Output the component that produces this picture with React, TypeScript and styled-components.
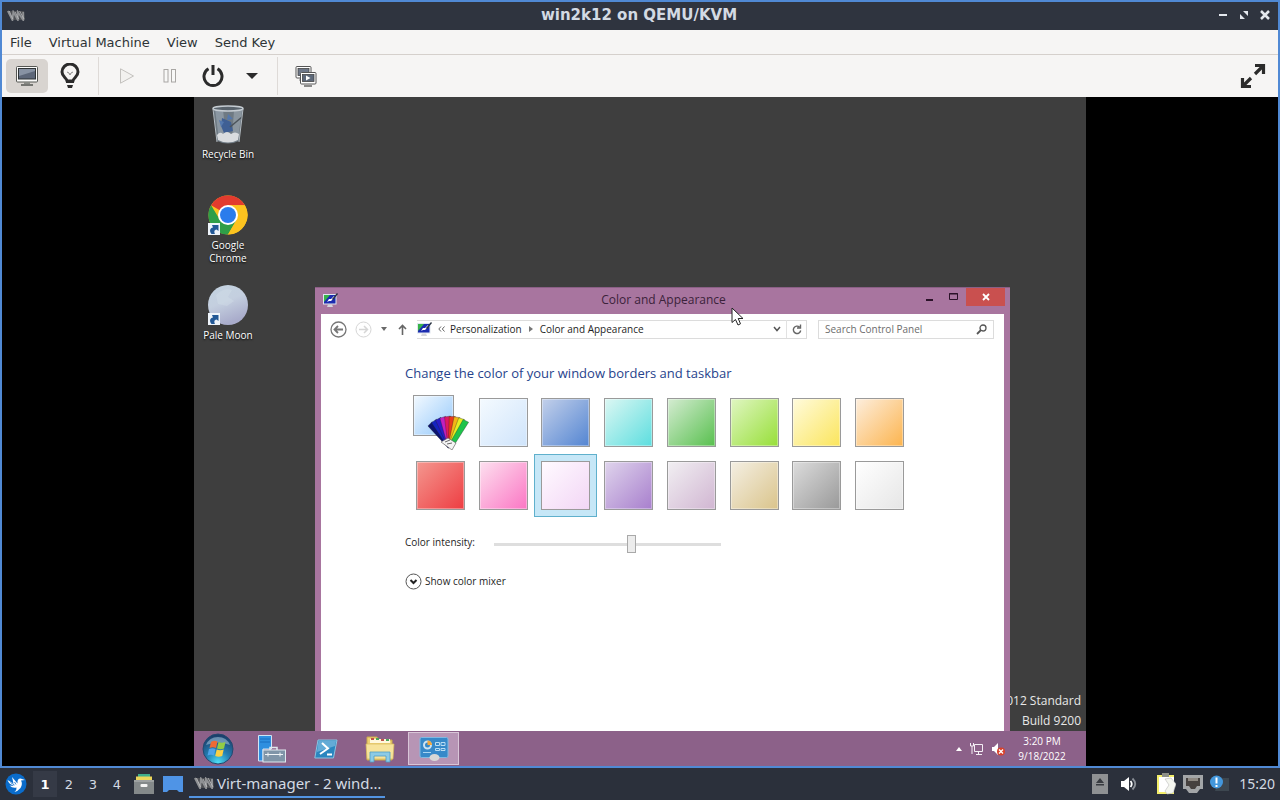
import React from "react";
import styled, { createGlobalStyle, css } from "styled-components";

const Global = createGlobalStyle`
  *, *::before, *::after { box-sizing: border-box; }
  body { margin: 0; background: #2b303b; }
  button, input { font: inherit; color: inherit; }
  button { background: none; border: 0; padding: 0; margin: 0; }
  h1, h2, p, ul { margin: 0; padding: 0; font-weight: inherit; font-size: inherit; }
  svg { display: block; }
`;

const guestFont = `"Open Sans", "Noto Sans", sans-serif`;

const Screen = styled.div`
  display: flex;
  flex-direction: column;
  height: 100vh;
`;

/* ---------- viewer window ---------- */

const Viewer = styled.main`
  flex: 1;
  min-height: 0;
  display: flex;
  flex-direction: column;
  border: 2px solid #5089d4;
  background: #f6f5f4;
  font: 13px/18px "DejaVu Sans", sans-serif;
  color: #2e3436;
`;

const TitleBar = styled.header`
  display: grid;
  grid-template-columns: 1fr auto 1fr;
  align-items: center;
  height: 28px;
  padding: 0 7px 2px 5px;
  background: #2f343f;
  color: #d3dae3;
`;

const ViewerTitle = styled.h1`
  font-size: 15px;
  font-weight: bold;
`;

const TitleButtons = styled.div`
  display: flex;
  justify-content: flex-end;
  gap: 9px;
`;

const TitleButton = styled.button`
  width: 12px;
  height: 12px;
  color: #e4e8ee;
`;

const MenuBar = styled.nav`
  display: flex;
  align-items: center;
  height: 25px;
  padding: 1px 0 0 8px;
  gap: 17px;
  border-bottom: 1px solid #d5d0cc;
`;

const Toolbar = styled.div`
  display: flex;
  align-items: center;
  height: 42px;
  padding: 0 12px 0 4px;
`;

const ToolButton = styled.button<{ $active?: boolean; $wide?: number }>`
  display: grid;
  place-items: center;
  width: ${(p) => p.$wide ?? 42}px;
  height: 34px;
  border-radius: 5px;
  ${(p) => p.$active && css`background: #d8d4d0;`}
`;

const ToolDivider = styled.span`
  width: 1px;
  height: 38px;
  margin: 0 7px;
  background: #dedad7;
`;

const Grow = styled.span`
  flex: 1;
`;

const Console = styled.div`
  flex: 1;
  min-height: 0;
  display: flex;
  justify-content: center;
  background: #000;
`;

/* ---------- guest desktop ---------- */

const Guest = styled.section`
  height: 100%;
  aspect-ratio: 4 / 3;
  display: flex;
  flex-direction: column;
  overflow: hidden;
  font: 11px/13px ${guestFont};
`;

const Desktop = styled.div`
  position: relative;
  flex: 1;
  min-height: 0;
  overflow: hidden;
  background: #3e3e3e;
`;

const Shortcuts = styled.ul`
  display: grid;
  grid-auto-rows: 90px;
  width: 68px;
  padding-top: 8px;
  list-style: none;
`;

const Shortcut = styled.button`
  display: flex;
  flex-direction: column;
  align-items: center;
  gap: 3px;
  width: 68px;
  font-size: 10px;
  color: #fff;
  text-shadow: 0 1px 2px #000;
`;

const Watermark = styled.p`
  position: absolute;
  right: 5px;
  bottom: 0;
  font-size: 12px;
  line-height: 20px;
  text-align: right;
  color: #e8e8e8;
`;

const Win = styled.section`
  position: absolute;
  top: 190px;
  left: 121px;
  width: 695px;
  height: 480px;
  display: flex;
  flex-direction: column;
  padding: 0 6px;
  background: #a8759f;
  border-top: 1px solid #8a5f85;
`;

const WinTitle = styled.header`
  display: grid;
  grid-template-columns: 1fr auto 1fr;
  align-items: center;
  height: 26px;
  padding: 0 0 2px 2px;
  color: #3b223a;
`;

const WinName = styled.h2`
  font-size: 12px;
  line-height: 16px;
`;

const WinButtons = styled.div`
  display: flex;
  justify-content: flex-end;
  align-self: start;
  margin-right: -1px;
`;

const WinButton = styled.button<{ $close?: boolean }>`
  display: grid;
  place-items: center;
  width: ${(p) => (p.$close ? 39 : 24)}px;
  height: 18px;
  ${(p) => p.$close && css`background: #c9504f; color: #fff;`}
`;

const WinBody = styled.div`
  flex: 1;
  background: #fff;
  color: #1e1e1e;
`;

const NavRow = styled.div`
  display: flex;
  align-items: center;
  height: 30px;
  padding: 0 10px 0 9px;
`;

const NavButton = styled.button<{ $w: number }>`
  display: grid;
  place-items: center;
  width: ${(p) => p.$w}px;
  height: 18px;
`;

const AddressBar = styled.div`
  flex: 1;
  display: flex;
  align-items: center;
  height: 19px;
  margin-right: 11px;
  border: 1px solid #dcdcdc;
  border-left: 0;
`;

const Crumb = styled.a`
  font-size: 10px;
  color: #1e1e1e;
  text-decoration: none;
`;

const CrumbMark = styled.span`
  display: grid;
  place-items: center;
  width: 18px;
`;

const RefreshCell = styled.span`
  padding-left: 1px;
  border-left: 1px solid #e2e2e2;
`;

const SearchBox = styled.label`
  display: flex;
  align-items: center;
  width: 176px;
  height: 19px;
  padding: 0 6px;
  border: 1px solid #dcdcdc;
`;

const SearchInput = styled.input`
  flex: 1;
  min-width: 0;
  padding: 0;
  border: 0;
  outline: 0;
  background: none;
  font-size: 10px;
  &::placeholder { color: #6d6d6d; opacity: 1; }
`;

const Panel = styled.div`
  padding: 20px 84px;
`;

const Heading = styled.h2`
  font-size: 13px;
  line-height: 18px;
  color: #27438c;
`;

const Swatches = styled.div`
  display: grid;
  grid-template-columns: repeat(8, 49px);
  justify-content: space-between;
  row-gap: 14px;
  width: 488px;
  margin: 16px 0 0 11px;
`;

const Swatch = styled.input<{ $from: string; $to: string }>`
  appearance: none;
  width: 49px;
  height: 49px;
  margin: 0;
  border: 1px solid #9a9a9a;
  background: linear-gradient(135deg, ${(p) => p.$from}, ${(p) => p.$to});
  box-shadow: inset 0 0 0 1px rgba(255, 255, 255, 0.35);
  &:checked {
    outline: 1px solid #5fb0cc;
    outline-offset: 6px;
    box-shadow: 0 0 0 6px #c6e7f7;
  }
`;

const CustomCell = styled.label`
  position: relative;
  width: 49px;
  height: 49px;
`;

const CustomSwatch = styled(Swatch)`
  position: absolute;
  top: -3px;
  left: -3px;
  width: 41px;
  height: 41px;
`;

const Fan = styled.svg`
  position: absolute;
  top: 16px;
  left: 11px;
`;

const SliderRow = styled.div`
  display: flex;
  align-items: center;
  height: 20px;
  margin-top: 24px;
`;

const SliderLabel = styled.label`
  width: 89px;
  padding-bottom: 3px;
  font-size: 10px;
`;

const Slider = styled.input`
  appearance: none;
  width: 227px;
  height: 18px;
  margin: 0;
  background: linear-gradient(#dedede, #dedede) center / 100% 3px no-repeat;
  &::-webkit-slider-thumb {
    appearance: none;
    width: 9px;
    height: 18px;
    border: 1px solid #a9a9a9;
    background: #ececec;
  }
`;

const MixerButton = styled.button`
  display: flex;
  align-items: center;
  gap: 3px;
  margin-top: 19px;
  font-size: 10px;
`;

const GuestBar = styled.footer`
  display: flex;
  align-items: center;
  height: 35px;
  background: #8c6189;
  color: #fff;
`;

const GuestApp = styled.button<{ $active?: boolean; $start?: boolean }>`
  display: grid;
  place-items: center;
  width: ${(p) => (p.$start ? 47 : 51)}px;
  height: 33px;
  margin-right: ${(p) => (p.$start ? 5 : 3)}px;
  ${(p) => p.$active && css`
    background: #b795b5;
    border: 1px solid #d9c6d8;
  `}
`;

const GuestTray = styled.div`
  display: flex;
  align-items: center;
  gap: 8px;
  margin-left: auto;
  padding-right: 15px;
`;

const GuestClock = styled.time`
  width: 58px;
  font-size: 10px;
  line-height: 15px;
  text-align: center;
`;

const Pointer = styled.svg`
  position: absolute;
  top: 210px;
  left: 537px;
`;

/* ---------- host panel ---------- */

const HostBar = styled.footer`
  display: flex;
  align-items: center;
  height: 32px;
  padding: 0 5px;
  background: #2b303b;
  font: 14px/20px "Noto Sans", sans-serif;
  color: #d3dae3;
`;

const HostIcon = styled.button<{ $gap?: number }>`
  margin-right: ${(p) => p.$gap ?? 0}px;
`;

const Pager = styled.div`
  display: flex;
  margin: 0 5px 0 6px;
`;

const PagerButton = styled.button<{ $active?: boolean }>`
  width: 24px;
  height: 26px;
  padding-top: 2px;
  font-family: "DejaVu Sans", sans-serif;
  font-size: 13px;
  ${(p) => p.$active && css`
    background: #353a46;
    font-weight: bold;
    color: #fff;
  `}
`;

const TaskButton = styled.button`
  display: flex;
  align-items: center;
  gap: 3px;
  width: 196px;
  height: 28px;
  margin-left: 6px;
  padding-left: 5px;
  border-bottom: 2px solid #5294e2;
  font-size: 15px;
`;

const HostTray = styled.div`
  display: flex;
  align-items: center;
  margin-left: auto;
`;

/* ---------- drawings ---------- */

const VmLogo = ({ w = 18, h = 11 }: { w?: number; h?: number }) => (
  <svg width={w} height={h} viewBox="0 0 20 12">
    <path d="M0 1h19l1 10H5z" fill="#4e5054" />
    <path d="M1 1l5 10L7 2l5 9 0-9 6 9V2" fill="none" stroke="#8f9194" strokeWidth="2" />
    <path d="M2.500 1l4 9M9 2l4 8M14 1l5 9" fill="none" stroke="#c4c5c7" strokeWidth=".8" />
  </svg>
);

const MonitorIcon = () => (
  <svg width="24" height="22" viewBox="0 0 24 22">
    <rect x="1.5" y="1.5" width="21" height="15.5" rx="1" fill="#fbfbfa" stroke="#555753" />
    <rect x="3.5" y="3.5" width="17" height="10.5" fill="#5c6678" stroke="#2e3436" />
    <path d="M4 4h16v2L4 11z" fill="#8792a3" />
    <path d="M9 17h6v2H9z" fill="#888a85" />
    <path d="M6 20h12" stroke="#555753" strokeWidth="1.5" />
  </svg>
);

const BulbIcon = () => (
  <svg width="20" height="26" viewBox="0 0 20 26" fill="none">
    <path d="M7 18c0-3-5-4-5-9a8 8 0 0 1 16 0c0 5-5 6-5 9z" stroke="#2b2b2b" strokeWidth="3" strokeLinejoin="round" />
    <path d="M7 9l2 1 1 2 1-2 2-1" stroke="#8b8b8b" />
    <path d="M6 17h8v3H6zM7 22h6l-1 3H8z" fill="#2b2b2b" />
  </svg>
);

const PlayIcon = () => (
  <svg width="16" height="16" viewBox="0 0 16 16">
    <path d="M1.500.8L14.500 8 1.500 15.200z" fill="#f2f1ef" stroke="#c3c1be" />
  </svg>
);

const PauseIcon = () => (
  <svg width="14" height="14" viewBox="0 0 14 14" fill="#f8f8f7" stroke="#a8a6a3">
    <rect x="1" y=".5" width="4" height="12.500" />
    <rect x="8.500" y=".5" width="4" height="12.500" />
  </svg>
);

const PowerIcon = () => (
  <svg width="22" height="24" viewBox="0 0 22 24" fill="none" stroke="#2b2b2b" strokeWidth="3">
    <path d="M6.500 4.800a9 9 0 1 0 9 0M11 1v10" />
  </svg>
);

const SnapshotsIcon = () => (
  <svg width="22" height="22" viewBox="0 0 22 22">
    <rect x="1" y="1.500" width="15" height="11.500" rx="1" fill="#fff" stroke="#555" />
    <rect x="3" y="3.500" width="11" height="7" fill="#6d7788" stroke="#444" strokeWidth=".8" />
    <path d="M4 15h4" stroke="#888" />
    <rect x="5.500" y="7.500" width="15.500" height="11.500" rx="1" fill="#fff" stroke="#555" />
    <rect x="7.500" y="9.500" width="11.500" height="7" fill="#5d6879" stroke="#444" strokeWidth=".8" />
    <path d="M11 10.500l4.500 2.500-4.500 2.500z" fill="#fff" />
    <path d="M9 21h8" stroke="#666" strokeWidth="1.500" />
  </svg>
);

const ExpandIcon = () => (
  <svg width="26" height="26" viewBox="0 0 26 26">
    <path d="M15 11l8-8M11 15l-8 8M15 2.500h8.500V11M11 23.500H2.500V15" fill="none" stroke="#2b2b2b" strokeWidth="3.200" />
  </svg>
);

const BinIcon = () => (
  <svg width="36" height="40" viewBox="0 0 36 40">
    <path d="M3 2l4 34q11 5 22 0l4-34z" fill="#6f7a83" />
    <path d="M5 4l4 31h7L13 4z" fill="#97a4af" opacity=".7" />
    <path d="M24 5l-2 30 6-1 4-29z" fill="#8b969f" />
    <path d="M12 13l9 4 2 9-9 2-3-7z" fill="#3f5f94" />
    <path d="M9 15l5 2-3 5zM18 9l5 5-6 1z" fill="#5478ad" />
    <path d="M20 22l12-10" stroke="#4c545b" strokeWidth="1.500" />
    <path d="M7 30q3-4 6-1 4-4 8 0 4-3 8 0l-1 6q-10 5-20 0z" fill="#d9dcdf" />
    <ellipse cx="18" cy="3.500" rx="15" ry="2.500" fill="#59636c" stroke="#c5ccd2" strokeWidth="1.500" />
    <path d="M3 4l4 33M33 4l-4 33" stroke="#b4bcc2" />
  </svg>
);

const LinkBadge = () => (
  <g transform="translate(0 28)">
    <rect width="12" height="12" fill="#eef4fa" />
    <path d="M3.500 11C1 8 2 5 5 4.500L4 2h6.500v6L8.500 6.500C6 7 6 9 7 11z" fill="#225896" />
  </g>
);

const ChromeIcon = () => (
  <svg width="40" height="41" viewBox="0 0 40 41">
    <circle cx="20" cy="20" r="19.500" fill="#fcc31f" />
    <path d="M20 20L3.100 10.200A19.500 19.500 0 0 1 36.900 10.200H20z" fill="#e23b2e" />
    <path d="M3.100 10.200A19.500 19.500 0 0 0 20 39.500L28.500 25 12 25z" fill="#2f9e48" />
    <path d="M20 20h8.500v5L20 39.500A19.500 19.500 0 0 0 36.900 10.200H20z" fill="#fcc31f" />
    <circle cx="20" cy="20" r="10" fill="#fff" />
    <circle cx="20" cy="20" r="8" fill="#2b7cec" />
    <LinkBadge />
  </svg>
);

const MoonIcon = () => (
  <svg width="40" height="41" viewBox="0 0 40 41">
    <defs>
      <linearGradient id="moon" x1="0" y1="0" x2=".4" y2="1">
        <stop offset="0" stopColor="#c3d3e0" />
        <stop offset=".5" stopColor="#c4cfdf" />
        <stop offset="1" stopColor="#a9accb" />
      </linearGradient>
    </defs>
    <circle cx="20" cy="20" r="20" fill="url(#moon)" />
    <path d="M8 10q8-8 16-5l-4 7 6 4-7 5-9-2z" fill="#d7e1ea" opacity=".35" />
    <LinkBadge />
  </svg>
);

const ThemeIcon = () => (
  <svg width="15" height="15" viewBox="0 0 15 15">
    <rect x=".5" y="1.500" width="12.500" height="9.500" fill="#1c2bb0" stroke="#dfe6ee" />
    <path d="M1 2h6L1 9z" fill="#37b34a" />
    <path d="M4 9l2-3 2 0 3-3 1 1-4 4H6z" fill="#fff" />
    <path d="M9 6l5-6 1 1-5 6z" fill="#27303f" />
    <path d="M5 11.500h4l1 2.500H4z" fill="#d5d5db" />
  </svg>
);

const OrbIcon = () => (
  <svg width="32" height="32" viewBox="0 0 32 32">
    <defs>
      <radialGradient id="orb" cx=".5" cy=".95" r=".9">
        <stop offset="0" stopColor="#4fe0f5" />
        <stop offset=".45" stopColor="#2480b4" />
        <stop offset="1" stopColor="#1b3f6b" />
      </radialGradient>
    </defs>
    <circle cx="16" cy="16" r="15" fill="url(#orb)" stroke="#24486f" />
    <path d="M4 12a13 13 0 0 1 24 0q-12-5-24 0z" fill="#a9c7dc" opacity=".55" />
    <path d="M9 9q3-2 6.500-.5L14 15q-3-1.500-6.500 0z" fill="#ee6a35" />
    <path d="M16.500 9q3.500 1.500 7 0L22 15.500q-3.500 1.500-7 0z" fill="#93cc45" />
    <path d="M7 16q3.500-1.500 6.500 0L12 22.500q-3-1.500-6.500 0z" fill="#4fa3e8" />
    <path d="M14.700 16.500q3.500 1.500 7 0l-1.500 6.500q-3.500 1.500-7 0z" fill="#fbd044" />
  </svg>
);

const ServerIcon = () => (
  <svg width="30" height="30" viewBox="0 0 30 30">
    <path d="M1.500 1.500h13V15H6v12H1.500z" fill="#2f8fe0" stroke="#cfe4f5" />
    <path d="M3 5h10M3 8h10" stroke="#1b6fc0" />
    <path d="M13 16v-2.500h7V16" fill="none" stroke="#dfe8ee" strokeWidth="1.500" />
    <rect x="6" y="16" width="22.500" height="12" fill="#7f95a8" stroke="#dfe8ee" />
    <path d="M8 20.500h18M11 18.500v4M23 18.500v4" stroke="#f0f4f6" />
  </svg>
);

const ShellIcon = () => (
  <svg width="24" height="20" viewBox="0 0 24 20">
    <path d="M4 1h19l-3.500 18H.8z" fill="#2a86bf" stroke="#8cc3e0" />
    <path d="M4.500 2H22l-1 5L3 13z" fill="#7cbbdf" opacity=".7" />
    <path d="M8 4l6 5.500L6 15M13 15.500h5" fill="none" stroke="#fff" strokeWidth="2" />
  </svg>
);

const FolderIcon = () => (
  <svg width="30" height="28" viewBox="0 0 30 28">
    <path d="M2 2h10l1 3h14v20H2z" fill="#eed275" stroke="#c9a84a" />
    <path d="M5 4h20v4H5z" fill="#fff8dc" />
    <path d="M6 4h3M16 5h3" stroke="#c0524a" strokeWidth="2" />
    <path d="M11 4h3M21 5h3" stroke="#4aa35b" strokeWidth="2" />
    <path d="M1 9h28l-1 15H2z" fill="#f7e39b" stroke="#d7b95c" strokeWidth=".7" />
    <path d="M5 27V17h20v10h-4v-6H9v6z" fill="#8ccbe6" stroke="#4f9dc4" strokeWidth=".8" />
  </svg>
);

const ControlPanelIcon = () => (
  <svg width="30" height="26" viewBox="0 0 30 26">
    <rect x="1" y="1.500" width="28" height="20" rx="1.500" fill="#3789c9" stroke="#7fb9e2" />
    <circle cx="8.500" cy="9" r="3.500" fill="none" stroke="#cfe3f1" strokeWidth="2" />
    <path d="M8.500 9V4.500A4.500 4.500 0 0 1 13 9z" fill="#f4a63a" />
    <path d="M16.500 6.500h4v3h-4zM22 6.500h4v3h-4zM16.500 12.500h4v2h-4zM22 12.500h4v2h-4z" fill="none" stroke="#b9dcf2" />
    <path d="M4 16.500h8" stroke="#a8d5f2" />
    <ellipse cx="15.500" cy="21.500" rx="5" ry="3.500" fill="#d8d8d6" />
  </svg>
);

const fanColors = ["#0b1370", "#1524c0", "#2a1cc8", "#c220c0", "#e01860", "#e83a1c", "#f4b516", "#e6ee22", "#1fc34b"];

const FanIcon = () => (
  <Fan width="42" height="36" viewBox="0 0 42 36">
    {fanColors.map((color, i) => (
      <path
        key={color}
        d="M21 33L17.500 3l6-1 2 31z"
        fill={color}
        stroke="#222"
        strokeWidth=".3"
        transform={`rotate(${-36 + i * 9} 23 33)`}
      />
    ))}
    <path d="M14 28l7-4 8 5-4 7z" fill="#f4f4f4" stroke="#555" strokeWidth=".6" />
    <path d="M18 28l5-2M20 30l5-1" stroke="#444" strokeWidth=".8" />
  </Fan>
);

const BirdIcon = () => (
  <svg width="22" height="22" viewBox="0 0 22 22">
    <circle cx="11" cy="11" r="10.500" fill="#0a6ccb" />
    <path d="M2.500 7l6 3.500L7 4l5.500 6.500Q12 5.500 15.500 5.500L20 7l-4 .6Q18 11 15.500 15 13 18 9.500 19q2.500-2.500 2-4.500-4 1-7-2 3 .5 4.500 0Q4 11.500 2.500 7z" fill="#fff" />
    <path d="M5.500 9.500l4 2.500M9.500 9l1.500 2.500" stroke="#0a6ccb" strokeWidth=".8" />
  </svg>
);

const CabinetIcon = () => (
  <svg width="20" height="22" viewBox="0 0 20 22">
    <path d="M4 1h12v4H4z" fill="#3fae8c" />
    <path d="M2 3.500h16V9H2z" fill="#ecd65b" />
    <path d="M0 7h20v14H0z" fill="#84898a" />
    <path d="M0 7h20v2H0z" fill="#9da1a1" />
    <rect x="6.500" y="11" width="7" height="3" rx="1" fill="#f4f4f4" />
  </svg>
);

const DesktopIcon = () => (
  <svg width="20" height="18" viewBox="0 0 20 18">
    <path d="M0 1h20v16h-4l-2-2H6l-2 2H0z" fill="#4f94e6" />
  </svg>
);

const EjectIcon = () => (
  <svg width="16" height="20" viewBox="0 0 16 20">
    <path d="M0 0h16v20H0z" fill="#8f9193" />
    <path d="M8 4l4 5H4zM4 10h8v1.500H4z" fill="#383b40" />
  </svg>
);

const SpeakerIcon = () => (
  <svg width="18" height="16" viewBox="0 0 18 16">
    <path d="M1 5h3l5-4v14l-5-4H1z" fill="#fff" />
    <path d="M10.500 5q2.500 3 0 6" stroke="#fff" strokeWidth="1.800" fill="none" />
    <path d="M12.500 2.500q5.500 5.500 0 11" stroke="#8b9097" strokeWidth="1.800" fill="none" />
  </svg>
);

const ClipboardIcon = () => (
  <svg width="20" height="22" viewBox="0 0 20 22">
    <path d="M1 2h17v19H1z" fill="#f4ee6a" />
    <path d="M3 4h15v15H3z" fill="#fff" />
    <path d="M6 0h7v4H6z" fill="#8d8f86" />
    <path d="M9 6l6-1 5 6-3 9-6 1-2-3 4-6z" fill="#f4f6ef" stroke="#bbb" strokeWidth=".6" />
  </svg>
);

const EthernetIcon = () => (
  <svg width="20" height="18" viewBox="0 0 20 18">
    <path d="M0 0h20v14h-3l-3 4H6l-3-4H0z" fill="#a3a5a7" />
    <path d="M3 3h14v8h-3l-2 3H8l-2-3H3z" fill="#46413f" />
    <path d="M6 3v3M8 3v3M10 3v3M12 3v3M14 3v3" stroke="#d6d0c4" />
  </svg>
);

const NoticeIcon = () => (
  <svg width="20" height="18" viewBox="0 0 20 18">
    <path d="M9 3h10v13H5z" fill="#3d4750" />
    <circle cx="6.500" cy="7" r="6.500" fill="#4397dc" />
    <path d="M6.500 2.500v6M6.500 10v2" stroke="#fff" strokeWidth="2" />
  </svg>
);

/* ---------- data ---------- */

const swatches = [
  ["Sky", "#f4faff", "#cfe4fb"],
  ["Blue", "#c3d0ea", "#5385d2"],
  ["Teal", "#dcf7f3", "#5cdedf"],
  ["Green", "#d5ecd2", "#58c04e"],
  ["Lime", "#e0f6c2", "#97df38"],
  ["Yellow", "#fffbdc", "#fbe55c"],
  ["Orange", "#fdeedd", "#fcb44e"],
  ["Red", "#f4978f", "#ee3d42"],
  ["Pink", "#fde0ef", "#fb76c4"],
  ["Lavender", "#fffaff", "#f2d6f5"],
  ["Purple", "#dfd4ec", "#a87fcd"],
  ["Mauve", "#f1eff2", "#d1b6d2"],
  ["Sand", "#f4efe3", "#dac48b"],
  ["Gray", "#dcdcdc", "#999999"],
  ["White", "#ffffff", "#e6e6e6"],
];

export default function App() {
  return (
    <>
      <Global />
      <Screen>
        <Viewer>
          <TitleBar>
            <VmLogo />
            <ViewerTitle>win2k12 on QEMU/KVM</ViewerTitle>
            <TitleButtons>
              <TitleButton aria-label="Minimize">
                <svg width="12" height="12"><path d="M2 6h8" stroke="currentColor" strokeWidth="2" /></svg>
              </TitleButton>
              <TitleButton aria-label="Restore">
                <svg width="12" height="12"><path d="M5 2h5v5zM2 5l5 5H2z" fill="currentColor" /></svg>
              </TitleButton>
              <TitleButton aria-label="Close">
                <svg width="12" height="12"><path d="M2 2l8 8M10 2l-8 8" stroke="currentColor" strokeWidth="2.500" /></svg>
              </TitleButton>
            </TitleButtons>
          </TitleBar>
          <MenuBar>
            <button>File</button>
            <button>Virtual Machine</button>
            <button>View</button>
            <button>Send Key</button>
          </MenuBar>
          <Toolbar>
            <ToolButton $active aria-label="Console"><MonitorIcon /></ToolButton>
            <ToolButton $wide={43} aria-label="Details"><BulbIcon /></ToolButton>
            <ToolDivider />
            <ToolButton aria-label="Run"><PlayIcon /></ToolButton>
            <ToolButton $wide={44} aria-label="Pause"><PauseIcon /></ToolButton>
            <ToolButton aria-label="Shut down"><PowerIcon /></ToolButton>
            <ToolButton $wide={36} aria-label="Shut down options">
              <svg width="12" height="6"><path d="M0 0h12L6 6z" fill="#2b2b2b" /></svg>
            </ToolButton>
            <ToolDivider />
            <ToolButton aria-label="Snapshots"><SnapshotsIcon /></ToolButton>
            <Grow />
            <ToolButton $wide={26} aria-label="Full screen"><ExpandIcon /></ToolButton>
          </Toolbar>
          <Console>
            <Guest>
              <Desktop>
                <Shortcuts>
                  <li><Shortcut><BinIcon />Recycle Bin</Shortcut></li>
                  <li><Shortcut><ChromeIcon />Google Chrome</Shortcut></li>
                  <li><Shortcut><MoonIcon />Pale Moon</Shortcut></li>
                </Shortcuts>
                <Watermark>2012 Standard<br />Build 9200</Watermark>
                <Win>
                  <WinTitle>
                    <ThemeIcon />
                    <WinName>Color and Appearance</WinName>
                    <WinButtons>
                      <WinButton aria-label="Minimize">
                        <svg width="10" height="10"><path d="M1 8h7" stroke="#2b1229" strokeWidth="2" /></svg>
                      </WinButton>
                      <WinButton aria-label="Maximize">
                        <svg width="10" height="10"><path d="M.5 1.500h8v6h-8zM0 2h9" stroke="#2b1229" fill="none" /></svg>
                      </WinButton>
                      <WinButton $close aria-label="Close">
                        <svg width="8" height="8"><path d="M1 1l6 6M7 1L1 7" stroke="currentColor" strokeWidth="1.800" /></svg>
                      </WinButton>
                    </WinButtons>
                  </WinTitle>
                  <WinBody>
                    <NavRow>
                      <NavButton $w={17} aria-label="Back">
                        <svg width="17" height="17" fill="none" stroke="#777"><circle cx="8.500" cy="8.500" r="7.500" strokeWidth="1.300" /><path d="M13 8.500H5M8 5L4.500 8.500 8 12" strokeWidth="1.800" /></svg>
                      </NavButton>
                      <NavButton $w={33} aria-label="Forward">
                        <svg width="17" height="17" fill="none" stroke="#d6d6d6"><circle cx="8.500" cy="8.500" r="7.500" /><path d="M4 8.500h8M9 5l3.500 3.500L9 12" strokeWidth="1.500" /></svg>
                      </NavButton>
                      <NavButton $w={8} aria-label="Recent pages">
                        <svg width="6" height="4"><path d="M0 0h6L3 4z" fill="#6a6a6a" /></svg>
                      </NavButton>
                      <NavButton $w={29} aria-label="Up">
                        <svg width="9" height="11" fill="none" stroke="#666" strokeWidth="1.600"><path d="M4.500 11V1.500M1 5l3.500-3.500L8 5" /></svg>
                      </NavButton>
                      <AddressBar>
                        <ThemeIcon />
                        <CrumbMark>
                          <svg width="7" height="6" fill="none" stroke="#666"><path d="M3 .5L.8 3 3 5.500M6.500.5L4.300 3l2.200 2.500" /></svg>
                        </CrumbMark>
                        <Crumb href="#personalization">Personalization</Crumb>
                        <CrumbMark>
                          <svg width="4" height="6"><path d="M0 0l4 3-4 3z" fill="#777" /></svg>
                        </CrumbMark>
                        <Crumb href="#color">Color and Appearance</Crumb>
                        <Grow />
                        <NavButton $w={18} aria-label="Previous locations">
                          <svg width="8" height="6" fill="none" stroke="#555" strokeWidth="1.500"><path d="M1 1l3 3.500L7 1" /></svg>
                        </NavButton>
                        <RefreshCell>
                          <NavButton $w={18} aria-label="Refresh">
                            <svg width="10" height="11" fill="none" stroke="#666" strokeWidth="1.400"><path d="M7.500 3A3.700 3.700 0 1 0 8.700 6.500M8.500.5V4H5" /></svg>
                          </NavButton>
                        </RefreshCell>
                      </AddressBar>
                      <SearchBox>
                        <SearchInput type="search" placeholder="Search Control Panel" aria-label="Search Control Panel" />
                        <svg width="11" height="11" fill="none" stroke="#555"><circle cx="7" cy="4" r="3" strokeWidth="1.300" /><path d="M5 6L1 10" strokeWidth="1.800" /></svg>
                      </SearchBox>
                    </NavRow>
                    <Panel>
                      <Heading>Change the color of your window borders and taskbar</Heading>
                      <Swatches role="radiogroup" aria-label="Window color">
                        <CustomCell>
                          <CustomSwatch type="radio" name="color" aria-label="Custom" $from="#f2f9ff" $to="#93c8fb" />
                          <FanIcon />
                        </CustomCell>
                        {swatches.map(([name, from, to]) => (
                          <Swatch
                            key={name}
                            type="radio"
                            name="color"
                            aria-label={name}
                            defaultChecked={name === "Lavender"}
                            $from={from}
                            $to={to}
                          />
                        ))}
                      </Swatches>
                      <SliderRow>
                        <SliderLabel htmlFor="intensity">Color intensity:</SliderLabel>
                        <Slider id="intensity" type="range" min="0" max="100" defaultValue="61" />
                      </SliderRow>
                      <MixerButton>
                        <svg width="17" height="17" fill="none" stroke="#555"><circle cx="8.500" cy="8.500" r="7.500" /><path d="M5.500 7l3 3 3-3" stroke="#222" strokeWidth="2" /></svg>
                        Show color mixer
                      </MixerButton>
                    </Panel>
                  </WinBody>
                </Win>
                <Pointer width="13" height="20" viewBox="0 0 13 20">
                  <path d="M1 1v14.500l3.500-3L7 18l2.500-1.200L7.200 11.500H12z" fill="#fff" stroke="#222" />
                </Pointer>
              </Desktop>
              <GuestBar>
                <GuestApp $start aria-label="Start"><OrbIcon /></GuestApp>
                <GuestApp aria-label="Server Manager"><ServerIcon /></GuestApp>
                <GuestApp aria-label="PowerShell"><ShellIcon /></GuestApp>
                <GuestApp aria-label="File Explorer"><FolderIcon /></GuestApp>
                <GuestApp $active aria-label="Control Panel"><ControlPanelIcon /></GuestApp>
                <GuestTray>
                  <svg width="6" height="4"><path d="M0 4h6L3 0z" fill="#fff" /></svg>
                  <svg width="14" height="14" fill="none" stroke="#f4eef4"><path d="M4.500 2.500h8v7h-8zM8.500 10v2.500M6 12.500h6M.5 1v3h3V1M2 4v8" /></svg>
                  <svg width="13" height="14"><path d="M0 5h2l4-4v12L2 9H0z" fill="#fff" /><circle cx="9" cy="9.500" r="4" fill="#d9412b" /><path d="M7 7.500l4 4M11 7.500l-4 4" stroke="#fff" strokeWidth="1.300" /></svg>
                  <GuestClock>3:20 PM<br />9/18/2022</GuestClock>
                </GuestTray>
              </GuestBar>
            </Guest>
          </Console>
        </Viewer>
        <HostBar>
          <HostIcon aria-label="Applications"><BirdIcon /></HostIcon>
          <Pager>
            {["1", "2", "3", "4"].map((n) => (
              <PagerButton key={n} $active={n === "1"}>{n}</PagerButton>
            ))}
          </Pager>
          <HostIcon $gap={9} aria-label="File manager"><CabinetIcon /></HostIcon>
          <HostIcon aria-label="Show desktop"><DesktopIcon /></HostIcon>
          <TaskButton><VmLogo w={20} h={12} />Virt-manager - 2 wind…</TaskButton>
          <HostTray>
            <HostIcon $gap={12} aria-label="Eject"><EjectIcon /></HostIcon>
            <HostIcon $gap={18} aria-label="Volume"><SpeakerIcon /></HostIcon>
            <HostIcon $gap={7} aria-label="Clipboard"><ClipboardIcon /></HostIcon>
            <HostIcon $gap={7} aria-label="Network"><EthernetIcon /></HostIcon>
            <HostIcon $gap={9} aria-label="Updates"><NoticeIcon /></HostIcon>
            <time>15:20</time>
          </HostTray>
        </HostBar>
      </Screen>
    </>
  );
}
